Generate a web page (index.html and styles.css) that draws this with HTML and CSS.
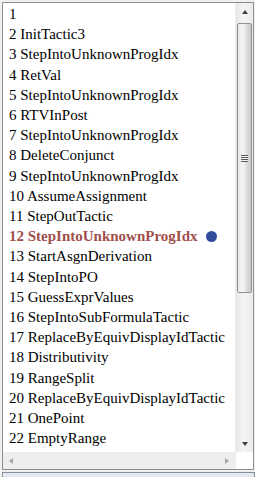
FILE: index.html
```html
<!DOCTYPE html>
<html lang="en">
  <head>
    <meta charset="UTF-8" />
    <title>Tactics</title>
    <link rel="stylesheet" href="styles.css">
  </head>
  <body>
    <div class="frame">
      <div class="view">
        <ul class="list">
          <li>1</li>
          <li>2 InitTactic3</li>
          <li>3 StepIntoUnknownProgIdx</li>
          <li>4 RetVal</li>
          <li>5 StepIntoUnknownProgIdx</li>
          <li>6 RTVInPost</li>
          <li>7 StepIntoUnknownProgIdx</li>
          <li>8 DeleteConjunct</li>
          <li>9 StepIntoUnknownProgIdx</li>
          <li>10 AssumeAssignment</li>
          <li>11 StepOutTactic</li>
          <li class="current">12 StepIntoUnknownProgIdx <span class="dot"></span></li>
          <li>13 StartAsgnDerivation</li>
          <li>14 StepIntoPO</li>
          <li>15 GuessExprValues</li>
          <li>16 StepIntoSubFormulaTactic</li>
          <li>17 ReplaceByEquivDisplayIdTactic</li>
          <li>18 Distributivity</li>
          <li>19 RangeSplit</li>
          <li>20 ReplaceByEquivDisplayIdTactic</li>
          <li>21 OnePoint</li>
          <li>22 EmptyRange</li>
        </ul>
        <div class="vbar">
          <div class="btn"><span class="arrow up"></span></div>
          <div class="track">
            <div class="thumb"><span class="grip"></span></div>
          </div>
          <div class="btn"><span class="arrow down"></span></div>
        </div>
      </div>
      <div class="hrow">
        <div class="hbar">
          <span class="arrow left"></span>
          <span class="arrow right"></span>
        </div>
        <div class="corner"></div>
      </div>
    </div>
    <div class="next"></div>
  </body>
</html>
```

FILE: styles.css
```css
body {
  margin: 0;
  background: #f0f0f0;
  font-family: "Liberation Serif", "Times New Roman", serif;
  overflow: hidden;
}
.frame {
  margin: 2px 0 0 2px;
  width: 252px;
  height: 468px;
  box-sizing: border-box;
  border: 1px solid #8a8f96;
  background: #fff;
  display: flex;
  flex-direction: column;
}
.view {
  flex: 1;
  display: flex;
  min-height: 0;
}
.list {
  flex: 1;
  margin: 0;
  padding: 1px 0 0 6px;
  list-style: none;
  font-size: 15px;
  line-height: 20.2px;
  color: #000;
  overflow: hidden;
  white-space: nowrap;
}
.current {
  color: #a0504c;
  font-weight: bold;
  display: flex;
  align-items: center;
  gap: 8px;
}
.dot {
  width: 11px;
  height: 11px;
  border-radius: 50%;
  background: #2f4f9b;
}
.vbar {
  width: 17px;
  display: flex;
  flex-direction: column;
  background: linear-gradient(to right, #e6e6e6, #f4f4f4 40%, #ebebeb);
  border-left: 1px solid #ececec;
}
.btn {
  height: 17px;
  display: flex;
  align-items: center;
  justify-content: center;
}
.track {
  flex: 1;
  padding: 3px 1px 0 1px;
}
.thumb {
  height: 270px;
  box-sizing: border-box;
  border: 1px solid #8e8f8f;
  border-radius: 2px;
  background: linear-gradient(to right, #e9e9e9, #f6f6f6 35%, #dcdcdc 70%, #c9c9c9);
  display: flex;
  align-items: center;
  justify-content: center;
}
.grip {
  width: 7px;
  height: 7px;
  background: repeating-linear-gradient(to bottom, #5a5a5a 0 1px, #f4f4f4 1px 2px);
}
.arrow {
  width: 0;
  height: 0;
  border: 3px solid transparent;
}
.up {
  border-bottom: 4px solid #404040;
  border-top: 0;
}
.down {
  border-top: 4px solid #404040;
  border-bottom: 0;
}
.hrow {
  height: 17px;
  display: flex;
}
.hbar {
  flex: 1;
  display: flex;
  align-items: center;
  justify-content: space-between;
  padding: 0 7px 0 6px;
  background: #eeeeee;
}
.left {
  border-right: 4px solid #a8a8a8;
  border-left: 0;
}
.right {
  border-left: 4px solid #a8a8a8;
  border-right: 0;
}
.corner {
  width: 17px;
  background: #fff;
}
.next {
  margin: 2px 0 0 2px;
  height: 12px;
  border: 1px solid #8a8f96;
  background: #e3e9f2;
}
```
